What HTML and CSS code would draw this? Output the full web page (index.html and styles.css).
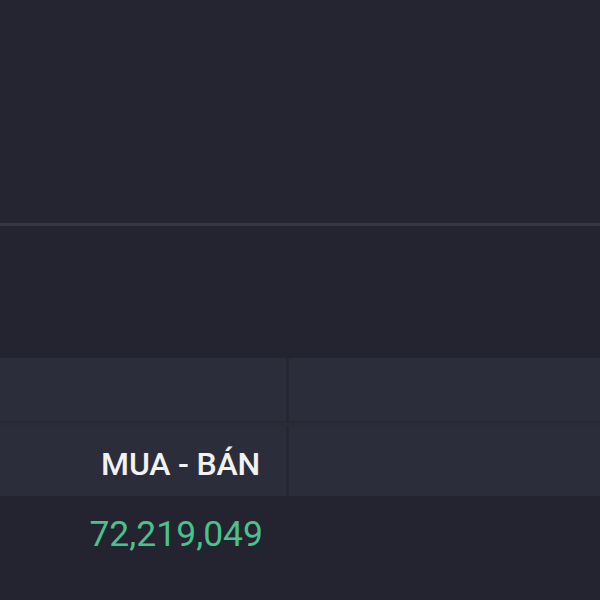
FILE: index.html
```html
<!DOCTYPE html>
<html lang="vi">
<head>
<meta charset="utf-8">
<link rel="stylesheet" href="styles.css">
</head>
<body>
<div class="page">
  <div class="top"></div>
  <div class="rule"></div>
  <div class="middle"></div>
  <div class="table">
    <div class="head head1">
      <div class="cell c1"></div>
      <div class="cell c2"></div>
    </div>
    <div class="head-div"></div>
    <div class="head head2">
      <div class="cell c1"><span class="label">MUA - BÁN</span></div>
      <div class="cell c2"></div>
    </div>
    <div class="row">
      <div class="cell c1"><span class="value">72,219,049</span></div>
      <div class="cell c2"></div>
    </div>
  </div>
</div>
</body>
</html>
```
FILE: styles.css
```css
html, body {
  margin: 0;
  padding: 0;
  background: #242531;
}
.page {
  width: 600px;
  height: 600px;
  overflow: hidden;
  font-family: Roboto, "Liberation Sans", sans-serif;
}
.top {
  height: 223px;
  background: #242531;
}
.rule {
  height: 3px;
  background: #363744;
}
.middle {
  height: 132px;
  background: #232430;
}
.head {
  display: grid;
  grid-template-columns: 289px 1fr;
  background: #2c2d3a;
}
.head1 {
  height: 63px;
}
.head-div {
  height: 6px;
  background: #2a2b37;
  border-top: 1px solid #252631;
  box-sizing: border-box;
}
.head2 {
  height: 69px;
}
.head .c1 {
  border-right: 3px solid #262732;
}
.cell {
  display: flex;
  align-items: center;
  justify-content: flex-end;
  padding-right: 26px;
}
.head2 .c1 {
  align-items: flex-end;
  padding-bottom: 16px;
  box-sizing: border-box;
}
.label {
  color: #f2f2f5;
  font-size: 32px;
  font-weight: 500;
  letter-spacing: -0.2px;
  line-height: 1;
}
.row {
  display: grid;
  grid-template-columns: 289px 1fr;
  height: 104px;
  background: #232430;
}
.row .c1 {
  align-items: flex-start;
  padding-top: 21px;
  padding-right: 23px;
  border-right: 3px solid transparent;
}
.value {
  color: #4cc18c;
  font-size: 35.5px;
  line-height: 1;
  letter-spacing: 0;
}
```
